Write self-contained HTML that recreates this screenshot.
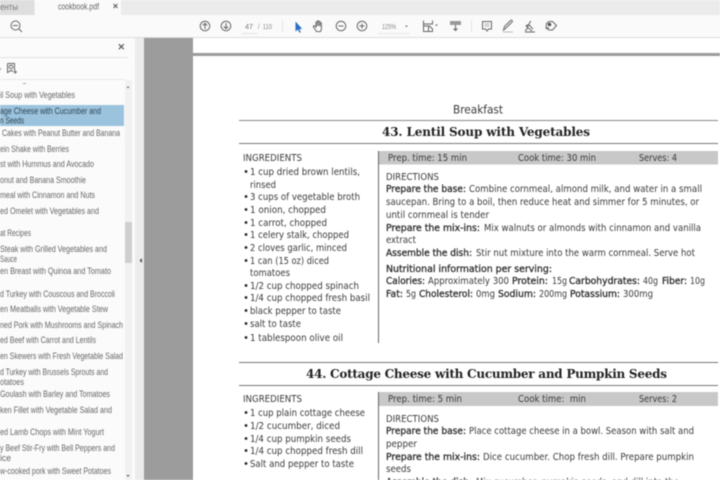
<!DOCTYPE html>
<html><head><meta charset="utf-8">
<style>
html,body{margin:0;padding:0;width:720px;height:480px;overflow:hidden;background:#fff}
svg{display:block;filter:blur(0.4px)}
text{font-family:"DejaVu Sans",sans-serif;font-size:10px;fill:#3a3a3a;white-space:pre}
.s text{font-family:"Liberation Sans",sans-serif;font-size:9px;fill:#666}
.b{fill:#2c2c2c;stroke:#2c2c2c;stroke-width:.3}
.h{font-family:"DejaVu Serif",serif;font-weight:bold;font-size:12px;fill:#222}
.i{fill:none;stroke:#666;stroke-width:1}
</style></head><body>
<svg width="720" height="480" viewBox="0 0 720 480" xmlns="http://www.w3.org/2000/svg">
<rect width="720" height="15" fill="#ebebeb"/>
<rect x="0" width="34" height="15" fill="#dedede"/>
<rect x="35" width="86" height="15" fill="#fafafa"/>
<rect y="15" width="720" height="22" fill="#fafafa"/>
<rect y="37" width="720" height="1" fill="#dcdcdc"/>
<text x="0" y="10" textLength="18" lengthAdjust="spacingAndGlyphs" style="font-family:'Liberation Sans',sans-serif;font-size:9px;fill:#777">енты</text>
<text x="58" y="9.500" textLength="41" lengthAdjust="spacingAndGlyphs" style="font-family:'Liberation Sans',sans-serif;font-size:9px;fill:#666">cookbook.pdf</text>
<path d="M113.500 4l4 4M117.500 4l-4 4" stroke="#555" stroke-width="1"/>

<!-- toolbar icons -->
<circle cx="15.500" cy="25.500" r="4.500" class="i"/><path d="M13 25.500h5M19 29l3 3" class="i"/>
<circle cx="205" cy="26" r="4.800" class="i"/><path d="M205 29v-5.500M202.800 25.500l2.200-2.200 2.200 2.200" class="i"/>
<circle cx="226" cy="26" r="4.800" class="i"/><path d="M226 23v5.500M223.800 26.500l2.200 2.200 2.200-2.200" class="i"/>
<text x="245" y="29" textLength="8" lengthAdjust="spacingAndGlyphs" style="font-family:'Liberation Sans',sans-serif;font-size:7px;fill:#777">47</text>
<rect x="242" y="33" width="15" height="1" fill="#e2e2e2"/>
<text x="258" y="29" textLength="14" lengthAdjust="spacingAndGlyphs" style="font-family:'Liberation Sans',sans-serif;font-size:7px;fill:#888">/  110</text>
<rect x="282" y="20" width="1" height="12" fill="#e4e4e4"/>
<path d="M295.500 21.500v10l2.300-2 1.700 3.300 1.300-.6-1.500-3.200h3z" fill="#2a6fc4"/>
<path d="M316.500 31.500l-3-4.500c-.7-1 .6-1.800 1.400-1l1.100 1.100v-4.600c0-.9 1.300-.9 1.300 0v3.500-4.600c0-.9 1.400-.9 1.400 0v4.600-4c0-.9 1.400-.9 1.400 0v4.300-3c0-.9 1.300-.9 1.300 0v5.300c0 1.300-.5 2.200-1.100 3z" class="i"/>
<circle cx="341" cy="26" r="4.800" class="i"/><path d="M338.500 26h5" class="i"/>
<circle cx="362" cy="26" r="4.800" class="i"/><path d="M359.500 26h5M362 23.500v5" class="i"/>
<text x="382" y="29" textLength="14" lengthAdjust="spacingAndGlyphs" style="font-family:'Liberation Sans',sans-serif;font-size:7px;fill:#888">125%</text>
<rect x="378" y="33" width="32" height="1" fill="#e8e8e8"/>
<path d="M405 25.500h3l-1.500 1.800z" fill="#777"/>
<path d="M423.500 20.500v11h5M432.500 20.500v3.500h-9M423.500 26h6l3 3v2.500h-4v-5" class="i"/>
<path d="M435 24.500h3l-1.500 1.800z" fill="#777"/>
<rect x="450" y="21" width="11" height="4" fill="#999"/><path d="M455.500 25v5.500M453.500 28.500l2 2 2-2" class="i"/>
<rect x="471" y="20" width="1" height="12" fill="#e4e4e4"/>
<path d="M482.500 21.500h9v7.500h-3l-1.500 2-1.500-2h-3z" class="i"/><path d="M484.500 24h5M484.500 26h5" stroke="#999" stroke-width=".7"/>
<path d="M503.500 30l1-3.500 6-6c1-1 2.500.5 1.500 1.500l-6 6z" class="i"/><path d="M503 32h10" stroke="#bbb"/>
<path d="M525 31l2-2c1-4 2-6 4-8M532 31l-6-5c2-2 4-1 5 1l2 2M525 32h10" class="i"/>
<path d="M549 21.500h3.500l4 4-4 4.500h-3.500l-3-2 .5-4.500z" class="i"/><circle cx="549.500" cy="24.500" r="1.800" fill="#555"/><path d="M546 28h3" stroke="#555"/>

<!-- sidebar -->
<rect y="38" width="135" height="442" fill="#fbfbfb"/>
<rect x="135" y="38" width="9" height="442" fill="#ececec"/>
<rect x="144" y="38" width="576" height="442" fill="#9c9c9c"/>
<rect x="0" y="57" width="128" height="1" fill="#e3e3e3"/>
<rect x="0" y="79" width="125" height="1" fill="#e8e8e8"/>
<path d="M118.800 44.200l5 5M123.800 44.200l-5 5" stroke="#555" stroke-width="1.100"/>
<path d="M7.500 63.500h7v7M7.500 63.500v9l3.500-2 2 1M13.500 72h3.500M15.200 70.300v3.400" class="i"/><circle cx="11" cy="67" r="1.800" class="i"/>
<rect x="0" y="68" width="1" height="2" fill="#999"/>
<rect x="23" y="83" width="3" height="1" fill="#aaa"/>
<rect x="125" y="80" width="7" height="400" fill="#f1f1f1"/>
<rect x="125" y="222" width="7" height="41" fill="#cfcfcf"/>
<path d="M126.500 88l1.500-2 1.500 2z" fill="#777"/><path d="M126.500 475l1.500 2 1.500-2z" fill="#555"/>
<path d="M142 258v5l-2.500-2.500z" fill="#555"/>
<rect x="0" y="105" width="124" height="21" fill="#9bc3dd"/>
<g class="s">
<text x="0" y="98" textLength="75" lengthAdjust="spacingAndGlyphs">il Soup with Vegetables</text>
<text x="0" y="114" textLength="101" lengthAdjust="spacingAndGlyphs" style="fill:#2d4454">age Cheese with Cucumber and</text>
<text x="0" y="123.500" textLength="24" lengthAdjust="spacingAndGlyphs" style="fill:#2d4454">n Seeds</text>
<text x="2" y="136" textLength="118" lengthAdjust="spacingAndGlyphs">Cakes with Peanut Butter and Banana</text>
<text x="0" y="152" textLength="69" lengthAdjust="spacingAndGlyphs">ein Shake with Berries</text>
<text x="0" y="167" textLength="94" lengthAdjust="spacingAndGlyphs">st with Hummus and Avocado</text>
<text x="0" y="183" textLength="86" lengthAdjust="spacingAndGlyphs">onut and Banana Smoothie</text>
<text x="0" y="198" textLength="95" lengthAdjust="spacingAndGlyphs">meal with Cinnamon and Nuts</text>
<text x="0" y="214" textLength="99" lengthAdjust="spacingAndGlyphs">ed Omelet with Vegetables and</text>
<text x="0" y="236" textLength="31" lengthAdjust="spacingAndGlyphs">at Recipes</text>
<text x="0" y="252" textLength="107" lengthAdjust="spacingAndGlyphs">Steak with Grilled Vegetables and</text>
<text x="0" y="262" textLength="17" lengthAdjust="spacingAndGlyphs">Sauce</text>
<text x="0" y="274" textLength="111" lengthAdjust="spacingAndGlyphs">en Breast with Quinoa and Tomato</text>
<text x="0" y="297" textLength="115" lengthAdjust="spacingAndGlyphs">d Turkey with Couscous and Broccoli</text>
<text x="0" y="312" textLength="108" lengthAdjust="spacingAndGlyphs">en Meatballs with Vegetable Stew</text>
<text x="0" y="328" textLength="123" lengthAdjust="spacingAndGlyphs">ned Pork with Mushrooms and Spinach</text>
<text x="0" y="343" textLength="96" lengthAdjust="spacingAndGlyphs">ed Beef with Carrot and Lentils</text>
<text x="0" y="359" textLength="123" lengthAdjust="spacingAndGlyphs">en Skewers with Fresh Vegetable Salad</text>
<text x="0" y="375" textLength="108" lengthAdjust="spacingAndGlyphs">d Turkey with Brussels Sprouts and</text>
<text x="0" y="385" textLength="24" lengthAdjust="spacingAndGlyphs">otatoes</text>
<text x="0" y="397" textLength="110" lengthAdjust="spacingAndGlyphs">Goulash with Barley and Tomatoes</text>
<text x="0" y="413" textLength="112" lengthAdjust="spacingAndGlyphs">ken Fillet with Vegetable Salad and</text>
<text x="0" y="435" textLength="104" lengthAdjust="spacingAndGlyphs">ed Lamb Chops with Mint Yogurt</text>
<text x="0" y="451" textLength="115" lengthAdjust="spacingAndGlyphs">y Beef Stir-Fry with Bell Peppers and</text>
<text x="0" y="461" textLength="11" lengthAdjust="spacingAndGlyphs">ice</text>
<text x="0" y="474" textLength="111" lengthAdjust="spacingAndGlyphs">w-cooked pork with Sweet Potatoes</text>
</g>

<!-- page -->
<rect x="193" y="38" width="527" height="442" fill="#fff"/>
<rect x="193" y="53" width="527" height="3" fill="#9c9c9c"/>
<text x="453" y="113.500" textLength="50" lengthAdjust="spacingAndGlyphs" style="font-size:11.500px">Breakfast</text>
<rect x="239" y="120" width="479" height="1" fill="#8a8a8a"/>
<text x="382" y="136" textLength="208" lengthAdjust="spacing" class="h">43. Lentil Soup with Vegetables</text>
<rect x="239" y="143" width="479" height="1" fill="#777"/>
<rect x="378" y="151" width="1" height="192" fill="#666"/>
<rect x="379" y="151" width="339" height="13.500" fill="#c8c8c8"/>
<text x="243" y="161" textLength="59" lengthAdjust="spacingAndGlyphs">INGREDIENTS</text>
<text x="388" y="161" textLength="79" lengthAdjust="spacingAndGlyphs">Prep. time: 15 min</text>
<text x="518" y="161" textLength="78" lengthAdjust="spacingAndGlyphs">Cook time: 30 min</text>
<text x="639" y="161" textLength="38" lengthAdjust="spacingAndGlyphs">Serves: 4</text>

<g fill="#222">
<circle cx="246" cy="171.500" r="1.400"/><circle cx="246" cy="196.500" r="1.400"/><circle cx="246" cy="209.500" r="1.400"/><circle cx="246" cy="222.500" r="1.400"/><circle cx="246" cy="234.500" r="1.400"/><circle cx="246" cy="247.500" r="1.400"/><circle cx="246" cy="260.500" r="1.400"/><circle cx="246" cy="285.500" r="1.400"/><circle cx="246" cy="297.500" r="1.400"/><circle cx="246" cy="310.500" r="1.400"/><circle cx="246" cy="323.500" r="1.400"/><circle cx="246" cy="337.500" r="1.400"/>
<circle cx="246" cy="412.500" r="1.400"/><circle cx="246" cy="425.500" r="1.400"/><circle cx="246" cy="438.500" r="1.400"/><circle cx="246" cy="450.500" r="1.400"/><circle cx="246" cy="463.500" r="1.400"/>
</g>
<text x="250" y="175" textLength="110" lengthAdjust="spacingAndGlyphs">1 cup dried brown lentils,</text>
<text x="250" y="188" textLength="26" lengthAdjust="spacingAndGlyphs">rinsed</text>
<text x="250" y="200" textLength="110" lengthAdjust="spacingAndGlyphs">3 cups of vegetable broth</text>
<text x="250" y="213" textLength="76" lengthAdjust="spacingAndGlyphs">1 onion, chopped</text>
<text x="250" y="226" textLength="77" lengthAdjust="spacingAndGlyphs">1 carrot, chopped</text>
<text x="250" y="238" textLength="99" lengthAdjust="spacingAndGlyphs">1 celery stalk, chopped</text>
<text x="250" y="251" textLength="97" lengthAdjust="spacingAndGlyphs">2 cloves garlic, minced</text>
<text x="250" y="264" textLength="79" lengthAdjust="spacingAndGlyphs">1 can (15 oz) diced</text>
<text x="250" y="276" textLength="40" lengthAdjust="spacingAndGlyphs">tomatoes</text>
<text x="250" y="289" textLength="109" lengthAdjust="spacingAndGlyphs">1/2 cup chopped spinach</text>
<text x="250" y="301" textLength="120" lengthAdjust="spacingAndGlyphs">1/4 cup chopped fresh basil</text>
<text x="250" y="314" textLength="91" lengthAdjust="spacingAndGlyphs">black pepper to taste</text>
<text x="250" y="327" textLength="51" lengthAdjust="spacingAndGlyphs">salt to taste</text>
<text x="250" y="341" textLength="93" lengthAdjust="spacingAndGlyphs">1 tablespoon olive oil</text>

<text x="386" y="180" textLength="53" lengthAdjust="spacingAndGlyphs">DIRECTIONS</text>
<text x="386" y="192" textLength="80" lengthAdjust="spacingAndGlyphs" class="b">Prepare the base:</text>
<text x="469" y="192" textLength="233" lengthAdjust="spacingAndGlyphs">Combine cornmeal, almond milk, and water in a small</text>
<text x="386" y="205" textLength="313" lengthAdjust="spacingAndGlyphs">saucepan. Bring to a boil, then reduce heat and simmer for 5 minutes, or</text>
<text x="386" y="218" textLength="103" lengthAdjust="spacingAndGlyphs">until cornmeal is tender</text>
<text x="386" y="231" textLength="94" lengthAdjust="spacingAndGlyphs" class="b">Prepare the mix-ins:</text>
<text x="484" y="231" textLength="217" lengthAdjust="spacingAndGlyphs">Mix walnuts or almonds with cinnamon and vanilla</text>
<text x="386" y="243" textLength="30" lengthAdjust="spacingAndGlyphs">extract</text>
<text x="386" y="256" textLength="86" lengthAdjust="spacingAndGlyphs" class="b">Assemble the dish:</text>
<text x="476" y="256" textLength="219" lengthAdjust="spacingAndGlyphs">Stir nut mixture into the warm cornmeal. Serve hot</text>
<text x="386" y="272" textLength="166" lengthAdjust="spacingAndGlyphs" class="b">Nutritional information per serving:</text>
<text x="386" y="284" textLength="39" lengthAdjust="spacingAndGlyphs" class="b">Calories:</text>
<text x="428" y="284" textLength="81" lengthAdjust="spacingAndGlyphs">Approximately 300</text>
<text x="512" y="284" textLength="36" lengthAdjust="spacingAndGlyphs" class="b">Protein:</text>
<text x="552" y="284" textLength="15" lengthAdjust="spacingAndGlyphs">15g</text>
<text x="569" y="284" textLength="71" lengthAdjust="spacingAndGlyphs" class="b">Carbohydrates:</text>
<text x="643" y="284" textLength="15" lengthAdjust="spacingAndGlyphs">40g</text>
<text x="662" y="284" textLength="25" lengthAdjust="spacingAndGlyphs" class="b">Fiber:</text>
<text x="690" y="284" textLength="15" lengthAdjust="spacingAndGlyphs">10g</text>
<text x="386" y="297" textLength="17" lengthAdjust="spacingAndGlyphs" class="b">Fat:</text>
<text x="406" y="297" textLength="10" lengthAdjust="spacingAndGlyphs">5g</text>
<text x="419" y="297" textLength="54" lengthAdjust="spacingAndGlyphs" class="b">Cholesterol:</text>
<text x="476" y="297" textLength="19" lengthAdjust="spacingAndGlyphs">0mg</text>
<text x="498" y="297" textLength="38" lengthAdjust="spacingAndGlyphs" class="b">Sodium:</text>
<text x="539" y="297" textLength="28" lengthAdjust="spacingAndGlyphs">200mg</text>
<text x="570" y="297" textLength="50" lengthAdjust="spacingAndGlyphs" class="b">Potassium:</text>
<text x="623" y="297" textLength="30" lengthAdjust="spacingAndGlyphs">300mg</text>

<rect x="239" y="362" width="479" height="1" fill="#777"/>
<text x="306" y="378" textLength="361" lengthAdjust="spacing" class="h">44. Cottage Cheese with Cucumber and Pumpkin Seeds</text>
<rect x="239" y="385" width="479" height="1" fill="#777"/>
<rect x="378" y="392" width="1" height="88" fill="#666"/>
<rect x="379" y="392" width="339" height="14" fill="#c8c8c8"/>
<text x="243" y="402" textLength="59" lengthAdjust="spacingAndGlyphs">INGREDIENTS</text>
<text x="388" y="402" textLength="74" lengthAdjust="spacingAndGlyphs">Prep. time: 5 min</text>
<text x="518" y="402" textLength="68" lengthAdjust="spacingAndGlyphs">Cook time:  min</text>
<text x="639" y="402" textLength="38" lengthAdjust="spacingAndGlyphs">Serves: 2</text>
<text x="250" y="416" textLength="115" lengthAdjust="spacingAndGlyphs">1 cup plain cottage cheese</text>
<text x="250" y="429" textLength="90" lengthAdjust="spacingAndGlyphs">1/2 cucumber, diced</text>
<text x="250" y="442" textLength="101" lengthAdjust="spacingAndGlyphs">1/4 cup pumpkin seeds</text>
<text x="250" y="454" textLength="113" lengthAdjust="spacingAndGlyphs">1/4 cup chopped fresh dill</text>
<text x="250" y="467" textLength="104" lengthAdjust="spacingAndGlyphs">Salt and pepper to taste</text>
<text x="386" y="422" textLength="53" lengthAdjust="spacingAndGlyphs">DIRECTIONS</text>
<text x="386" y="434" textLength="80" lengthAdjust="spacingAndGlyphs" class="b">Prepare the base:</text>
<text x="469" y="434" textLength="225" lengthAdjust="spacingAndGlyphs">Place cottage cheese in a bowl. Season with salt and</text>
<text x="386" y="447" textLength="31" lengthAdjust="spacingAndGlyphs">pepper</text>
<text x="386" y="460" textLength="94" lengthAdjust="spacingAndGlyphs" class="b">Prepare the mix-ins:</text>
<text x="483" y="460" textLength="211" lengthAdjust="spacingAndGlyphs">Dice cucumber. Chop fresh dill. Prepare pumpkin</text>
<text x="386" y="472" textLength="25" lengthAdjust="spacingAndGlyphs">seeds</text>
<text x="386" y="485" textLength="86" lengthAdjust="spacingAndGlyphs" class="b">Assemble the dish:</text>
<text x="476" y="485" textLength="203" lengthAdjust="spacingAndGlyphs">Mix cucumber, pumpkin seeds, and dill into the</text>
</svg>
</body></html>
